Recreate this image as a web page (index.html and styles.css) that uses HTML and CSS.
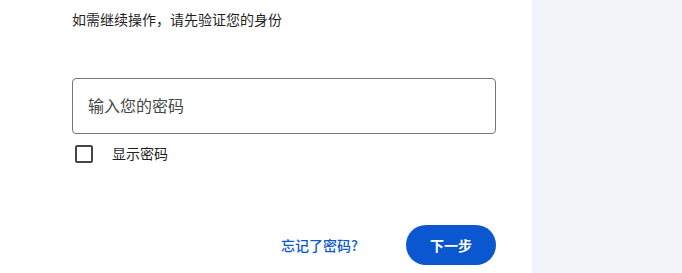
FILE: index.html
```html
<!DOCTYPE html>
<html lang="zh-CN">
<head>
<meta charset="utf-8">
<link rel="stylesheet" href="styles.css">
</head>
<body>
<div class="page">
  <main class="panel">
    <p class="intro">如需继续操作，请先验证您的身份</p>
    <div class="field">
      <span class="placeholder">输入您的密码</span>
    </div>
    <label class="show">
      <span class="box"></span>
      <span class="show-text">显示密码</span>
    </label>
    <div class="actions">
      <a class="forgot">忘记了密码?</a>
      <button class="next">下一步</button>
    </div>
  </main>
  <aside class="side"></aside>
</div>
</body>
</html>
```

FILE: styles.css
```css
html, body {
  margin: 0;
  padding: 0;
  height: 100%;
  background: #ffffff;
}
body {
  font-family: "Noto Sans CJK SC", "Noto Sans", sans-serif;
  color: #1f1f1f;
}
.page {
  display: flex;
  height: 273px;
}
.panel {
  width: 532px;
  box-sizing: border-box;
  padding: 0 36px 0 72px;
  display: flex;
  flex-direction: column;
}
.side {
  flex: 1;
  background: #f0f4f9;
}
.intro {
  margin: 9px 0 0 0;
  font-size: 14px;
  line-height: 20px;
  color: #1f1f1f;
}
.field {
  margin-top: 49px;
  height: 56px;
  box-sizing: border-box;
  border: 1px solid #747775;
  border-radius: 4px;
  display: flex;
  align-items: center;
  padding-left: 15px;
  padding-bottom: 3px;
}
.placeholder {
  font-size: 16px;
  color: #444746;
  line-height: 24px;
}
.show {
  margin-top: 7px;
  height: 24px;
  display: flex;
  align-items: center;
}
.box {
  width: 18px;
  height: 18px;
  box-sizing: border-box;
  border: 2px solid #444746;
  border-radius: 2px;
  margin-left: 3px;
  margin-top: 1px;
}
.show-text {
  margin-left: 19px;
  font-size: 14px;
  color: #1f1f1f;
}
.actions {
  margin-top: 60px;
  display: flex;
  justify-content: flex-end;
  align-items: center;
  gap: 48px;
}
.forgot {
  font-size: 14px;
  font-weight: 500;
  color: #0b57d0;
}
.next {
  height: 40px;
  padding: 0 24px;
  border: none;
  border-radius: 20px;
  background: #0b57d0;
  color: #ffffff;
  font-family: inherit;
  font-size: 14px;
  font-weight: 600;
}
```
